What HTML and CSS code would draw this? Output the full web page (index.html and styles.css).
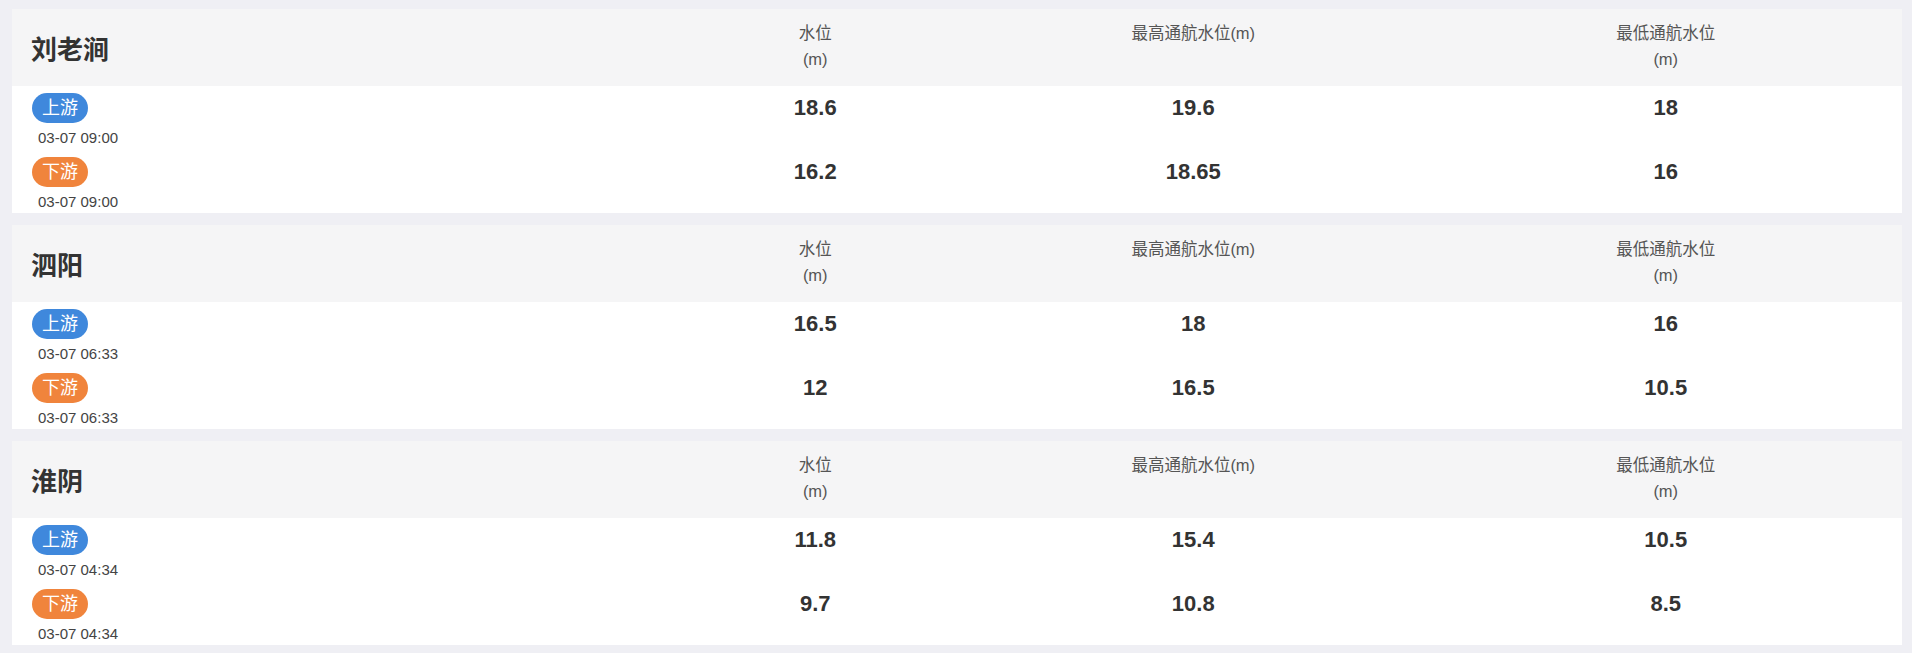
FILE: index.html
```html
<!DOCTYPE html>
<html lang="zh-CN">
<head>
<meta charset="utf-8">
<title>水位</title>
<link rel="stylesheet" href="styles.css">
</head>
<body>
<div class="page">
  <section class="station">
    <div class="head">
      <div class="name">刘老涧</div>
      <div class="col">水位<br>(m)</div>
      <div class="col">最高通航水位(m)</div>
      <div class="col">最低通航水位<br>(m)</div>
    </div>
    <div class="body">
      <div class="row">
        <div class="loc"><span class="tag up">上游</span><div class="time">03-07 09:00</div></div>
        <div class="val">18.6</div><div class="val">19.6</div><div class="val">18</div>
      </div>
      <div class="row">
        <div class="loc"><span class="tag down">下游</span><div class="time">03-07 09:00</div></div>
        <div class="val">16.2</div><div class="val">18.65</div><div class="val">16</div>
      </div>
    </div>
  </section>
  <section class="station">
    <div class="head">
      <div class="name">泗阳</div>
      <div class="col">水位<br>(m)</div>
      <div class="col">最高通航水位(m)</div>
      <div class="col">最低通航水位<br>(m)</div>
    </div>
    <div class="body">
      <div class="row">
        <div class="loc"><span class="tag up">上游</span><div class="time">03-07 06:33</div></div>
        <div class="val">16.5</div><div class="val">18</div><div class="val">16</div>
      </div>
      <div class="row">
        <div class="loc"><span class="tag down">下游</span><div class="time">03-07 06:33</div></div>
        <div class="val">12</div><div class="val">16.5</div><div class="val">10.5</div>
      </div>
    </div>
  </section>
  <section class="station">
    <div class="head">
      <div class="name">淮阴</div>
      <div class="col">水位<br>(m)</div>
      <div class="col">最高通航水位(m)</div>
      <div class="col">最低通航水位<br>(m)</div>
    </div>
    <div class="body">
      <div class="row">
        <div class="loc"><span class="tag up">上游</span><div class="time">03-07 04:34</div></div>
        <div class="val">11.8</div><div class="val">15.4</div><div class="val">10.5</div>
      </div>
      <div class="row">
        <div class="loc"><span class="tag down">下游</span><div class="time">03-07 04:34</div></div>
        <div class="val">9.7</div><div class="val">10.8</div><div class="val">8.5</div>
      </div>
    </div>
  </section>
</div>
</body>
</html>
```
FILE: styles.css
```css
html, body {
  margin: 0;
  padding: 0;
}
body {
  background: #efeff4;
  font-family: "Liberation Sans", "Noto Sans CJK SC", sans-serif;
  color: #333;
}
.page {
  padding: 9px 10px 8px 12px;
  display: flex;
  flex-direction: column;
  gap: 12px;
}
.station {
  background: #fff;
}
.head,
.row {
  display: grid;
  grid-template-columns: 35% 15% 25% 25%;
}
.head {
  background: #f5f5f6;
  height: 77px;
  box-sizing: border-box;
}
.name {
  align-self: center;
  padding-left: 19px;
  font-size: 26px;
  font-weight: bold;
  color: #333;
}
.col {
  padding-top: 11px;
  text-align: center;
  font-size: 16.5px;
  line-height: 26px;
  color: #555;
}
.body {
  padding: 7px 0 1px;
  display: flex;
  flex-direction: column;
  gap: 9px;
}
.loc {
  padding-left: 20px;
}
.tag {
  display: inline-block;
  height: 30px;
  line-height: 30px;
  padding: 0 10px;
  border-radius: 15px;
  color: #fff;
  font-size: 18px;
  vertical-align: top;
}
.tag.up {
  background: #3f88dc;
}
.tag.down {
  background: #f0843c;
}
.time {
  margin-top: 4px;
  padding-left: 6px;
  font-size: 15px;
  line-height: 21px;
  color: #444;
}
.val {
  text-align: center;
  font-size: 22px;
  font-weight: bold;
  line-height: 30px;
  color: #333;
}
```
